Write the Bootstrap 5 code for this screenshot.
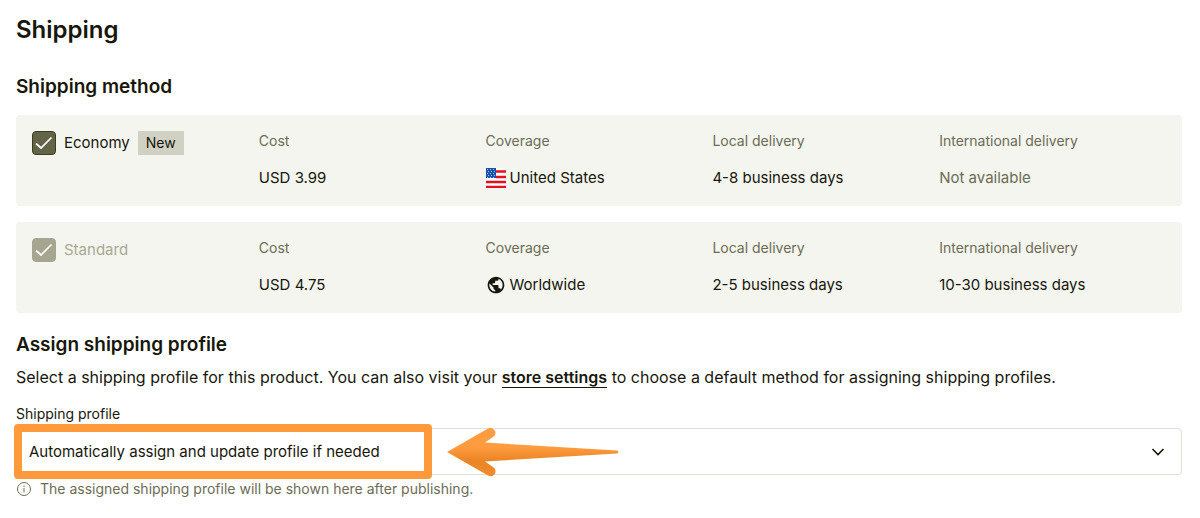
<!DOCTYPE html>
<html lang="en">
<head>
<meta charset="utf-8">
<meta name="viewport" content="width=device-width, initial-scale=1">
<title>Shipping</title>
<link href="https://cdn.jsdelivr.net/npm/bootstrap@5.3.0/dist/css/bootstrap.min.css" rel="stylesheet">
<style>
  :root { --ink: #17170b; --muted: #6c6c55; --panel: #f4f5ef; --line: #dfdfd5; --accent: #ff9a3c; }
  body { font-family: Inter, "Liberation Sans", sans-serif; font-size: 15px; line-height: 24px; color: var(--ink); background: #fff; }
  .page { padding: 14px 18px 16px 16px; }
  .page h1 { font-size: 24px; line-height: 32px; font-weight: 600; margin-bottom: 29px; }
  .page h2 { font-size: 19px; line-height: 24px; font-weight: 600; }
  .methods { margin-bottom: 20px; }
  .method { background: var(--panel); border-radius: 4px; padding: 16px; }
  .method dt { font-size: 14px; line-height: 20px; font-weight: 400; color: var(--muted); margin-bottom: 15px; }
  .method dd { margin: 0; }
  .muted { color: var(--muted); }
  .method .form-check-input { width: 24px; height: 24px; margin: 0; border-radius: 4px; border: 1px solid #3d3d1c; background-color: #636348; background-size: 24px; background-position: center;
    background-image: url("data:image/svg+xml,%3Csvg xmlns='http://www.w3.org/2000/svg' viewBox='0 0 24 24'%3E%3Cpath d='M4 12.500l5 4.500L19.500 6.500' fill='none' stroke='%23fff' stroke-width='1.700'/%3E%3C/svg%3E"); }
  .method .form-check-input:disabled { opacity: 1; background-color: #a6a58f; border-color: #a6a58f; }
  .method .form-check-input:disabled ~ label { opacity: 1; color: #a9a993; }
  .tag-new { background: #d0d1c3; font-size: 14px; padding: 0 8px; }
  .intro { font-size: 16px; margin-bottom: 15px; }
  .store-link { color: var(--ink); font-weight: 600; text-decoration: none; border-bottom: 1px solid var(--ink); }
  .field-label { font-size: 14px; line-height: 20px; }
  .page .form-select { height: 47px; padding: 2px 44px 0 12px; font-size: 15px; color: var(--ink); border: 1px solid var(--line); border-radius: 4px; background-size: 16px; background-position: right 15px center;
    background-image: url("data:image/svg+xml,%3Csvg xmlns='http://www.w3.org/2000/svg' viewBox='0 0 16 16'%3E%3Cpath d='M2.500 5L8 10.500l5.500-5.500' fill='none' stroke='%2317170b' stroke-width='1.600'/%3E%3C/svg%3E"); }
  .callout-frame { left: -2px; top: -4px; bottom: -4px; width: 418px; border: 8px solid var(--accent); border-radius: 4px; pointer-events: none; }
  .callout-arrow { left: 430px; top: -1px; pointer-events: none; }
  .hint { font-size: 14px; line-height: 20px; color: var(--muted); }
</style>
</head>
<body>
<main class="page">
  <h1>Shipping</h1>
  <section class="methods d-flex flex-column gap-3">
    <h2 class="mb-0">Shipping method</h2>
    <article class="method row row-cols-5 g-0">
      <div class="col d-flex align-items-start">
        <input class="form-check-input" type="checkbox" id="economy" checked>
        <label class="ms-2" for="economy">Economy</label>
        <span class="tag-new ms-2">New</span>
      </div>
      <dl class="col mb-0"><dt>Cost</dt><dd>USD 3.99</dd></dl>
      <dl class="col mb-0"><dt>Coverage</dt><dd class="d-flex align-items-center gap-1">
        <svg width="20" height="20" viewBox="0 0 20 20" aria-hidden="true">
          <path fill="#fff" d="M0 0h20v20H0z"/>
          <path stroke="#e3111f" stroke-width="2.400" d="M10 3.500h10M10 9h10M0 14h20M0 19h20"/>
          <path fill="#1750ad" d="M0 0h10v10H0z"/>
          <path stroke="#a9c4ee" stroke-width="1" stroke-dasharray="1 2" d="M1 1.500h8M2 3.500h8M1 5.500h8M2 7.500h8M1 9.500h8"/>
        </svg>United States</dd></dl>
      <dl class="col mb-0"><dt>Local delivery</dt><dd>4-8 business days</dd></dl>
      <dl class="col mb-0"><dt>International delivery</dt><dd class="muted">Not available</dd></dl>
    </article>
    <article class="method row row-cols-5 g-0">
      <div class="col d-flex align-items-start">
        <input class="form-check-input" type="checkbox" id="standard" checked disabled>
        <label class="ms-2" for="standard">Standard</label>
      </div>
      <dl class="col mb-0"><dt>Cost</dt><dd>USD 4.75</dd></dl>
      <dl class="col mb-0"><dt>Coverage</dt><dd class="d-flex align-items-center gap-1">
        <svg width="20" height="20" viewBox="0 0 24 24" fill="#17170b" aria-hidden="true">
          <path d="M12 2C6.480 2 2 6.480 2 12s4.480 10 10 10 10-4.480 10-10S17.520 2 12 2zm-1 17.930c-3.950-.49-7-3.850-7-7.930 0-.62.080-1.210.210-1.790L9 15v1c0 1.100.9 2 2 2v1.930zm6.900-2.540c-.26-.81-1-1.390-1.900-1.390h-1v-3c0-.55-.45-1-1-1H8v-2h2c.55 0 1-.45 1-1V7h2c1.100 0 2-.9 2-2v-.41c2.930 1.190 5 4.060 5 7.410 0 2.080-.8 3.970-2.100 5.390z"/>
        </svg>Worldwide</dd></dl>
      <dl class="col mb-0"><dt>Local delivery</dt><dd>2-5 business days</dd></dl>
      <dl class="col mb-0"><dt>International delivery</dt><dd>10-30 business days</dd></dl>
    </article>
  </section>
  <section>
    <h2 class="mb-2">Assign shipping profile</h2>
    <p class="intro">Select a shipping profile for this product. You can also visit your <a class="store-link" href="#">store settings</a> to choose a default method for assigning shipping profiles.</p>
    <label class="field-label d-block mb-1" for="profile">Shipping profile</label>
    <div class="position-relative">
      <select class="form-select" id="profile" aria-describedby="profile-hint">
        <option>Automatically assign and update profile if needed</option>
      </select>
      <div class="callout-frame position-absolute"></div>
      <svg class="callout-arrow position-absolute" width="174" height="50" viewBox="0 0 174 50" aria-hidden="true">
        <defs><linearGradient id="amber" x1="0" y1="0" x2="0" y2="1"><stop offset=".4" stop-color="#ff9c40"/><stop offset=".68" stop-color="#ea8524"/><stop offset="1" stop-color="#f18d2d"/></linearGradient></defs>
        <path fill="url(#amber)" d="M1 25L42 1.500C47-1 53 6 47 10L39 15.500L171 23.500Q174 25 171 26.500L39 34.500L47 40C53 44 47 51.500 42 48.500Z"/>
      </svg>
    </div>
    <div class="hint d-flex align-items-center mt-1" id="profile-hint">
      <svg class="me-2" width="16" height="16" viewBox="0 0 16 16" fill="none" stroke="#6c6c55" aria-hidden="true"><circle cx="8" cy="8" r="6.500"/><path d="M8 7v4.500M8 4.500V6"/></svg>
      The assigned shipping profile will be shown here after publishing.
    </div>
  </section>
</main>
<script src="https://cdn.jsdelivr.net/npm/bootstrap@5.3.0/dist/js/bootstrap.bundle.min.js"></script>
</body>
</html>
